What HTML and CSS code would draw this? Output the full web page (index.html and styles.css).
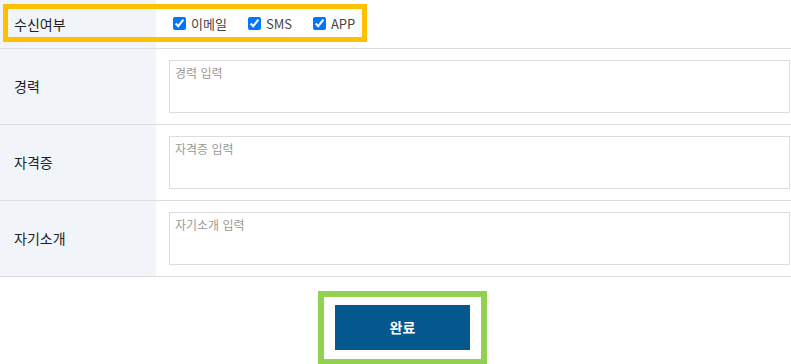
FILE: index.html
```html
<!DOCTYPE html>
<html lang="ko">
<head>
  <meta charset="UTF-8" />
  <meta name="viewport" content="width=device-width, initial-scale=1.0"/>
  <title>회원정보 입력</title>
  <link rel="stylesheet" href="styles.css">
</head>
<body>
  <div class="form-wrap">
    <table class="form-table">
      <tbody>
        <tr class="row-short">
          <th>수신여부</th>
          <td>
            <div class="check-group">
              <label class="check"><input type="checkbox" checked /> 이메일</label>
              <label class="check"><input type="checkbox" checked /> SMS</label>
              <label class="check"><input type="checkbox" checked /> APP</label>
            </div>
          </td>
        </tr>
        <tr>
          <th>경력</th>
          <td><textarea class="field" placeholder="경력 입력"></textarea></td>
        </tr>
        <tr>
          <th>자격증</th>
          <td><textarea class="field" placeholder="자격증 입력"></textarea></td>
        </tr>
        <tr>
          <th>자기소개</th>
          <td><textarea class="field" placeholder="자기소개 입력"></textarea></td>
        </tr>
      </tbody>
    </table>
    <!-- highlight over the consent row -->
    <div class="mark-yellow"></div>
  </div>

  <div class="btn-area">
    <div class="mark-green">
      <button type="button" class="submit-btn">완료</button>
    </div>
  </div>
</body>
</html>
```

FILE: styles.css
```css
body {
  margin: 0;
  background: #fff;
  font-family: "Noto Sans CJK KR", "Noto Sans", sans-serif;
  color: #222;
}

.form-wrap {
  position: relative;
}

.form-table {
  width: 100%;
  border-collapse: collapse;
}

.form-table th,
.form-table td {
  border-bottom: 1px solid #ddd;
  vertical-align: middle;
}

.form-table th {
  width: 156px;
  padding: 0 0 0 14px;
  box-sizing: border-box;
  background: #f1f4f8;
  text-align: left;
  font-size: 14px;
  font-weight: normal;
  color: #222;
}

.form-table td {
  padding: 11px 1px 11px 13px;
}

.row-short th,
.row-short td {
  height: 48px;
  padding-top: 0;
  padding-bottom: 0;
  box-sizing: border-box;
}

.check-group {
  display: flex;
  align-items: center;
  gap: 21px;
  padding-left: 4px;
}

.check {
  display: flex;
  align-items: center;
  gap: 5px;
  font-size: 13px;
  font-weight: normal;
  color: #444;
}

.check input {
  width: 13px;
  height: 13px;
  margin: 0;
}

.field {
  display: block;
  width: 100%;
  height: 53px;
  box-sizing: border-box;
  border: 1px solid #ddd;
  padding: 3px 5px;
  font-family: inherit;
  font-size: 12px;
  resize: none;
  outline: none;
}

.field::placeholder {
  color: #999;
}

.mark-yellow {
  position: absolute;
  left: 3px;
  top: 4px;
  width: 364px;
  height: 38px;
  box-sizing: border-box;
  border: 5px solid #ffc000;
}

.btn-area {
  display: flex;
  justify-content: center;
  padding-top: 14px;
}

.mark-green {
  border: 6px solid #92d050;
  padding: 8px 11px 9px 11px;
  margin-left: 14px;
}

.submit-btn {
  display: block;
  width: 135px;
  height: 45px;
  border: none;
  background: #04588f;
  color: #fff;
  font-family: inherit;
  font-size: 14px;
  font-weight: bold;
  cursor: pointer;
}
```
